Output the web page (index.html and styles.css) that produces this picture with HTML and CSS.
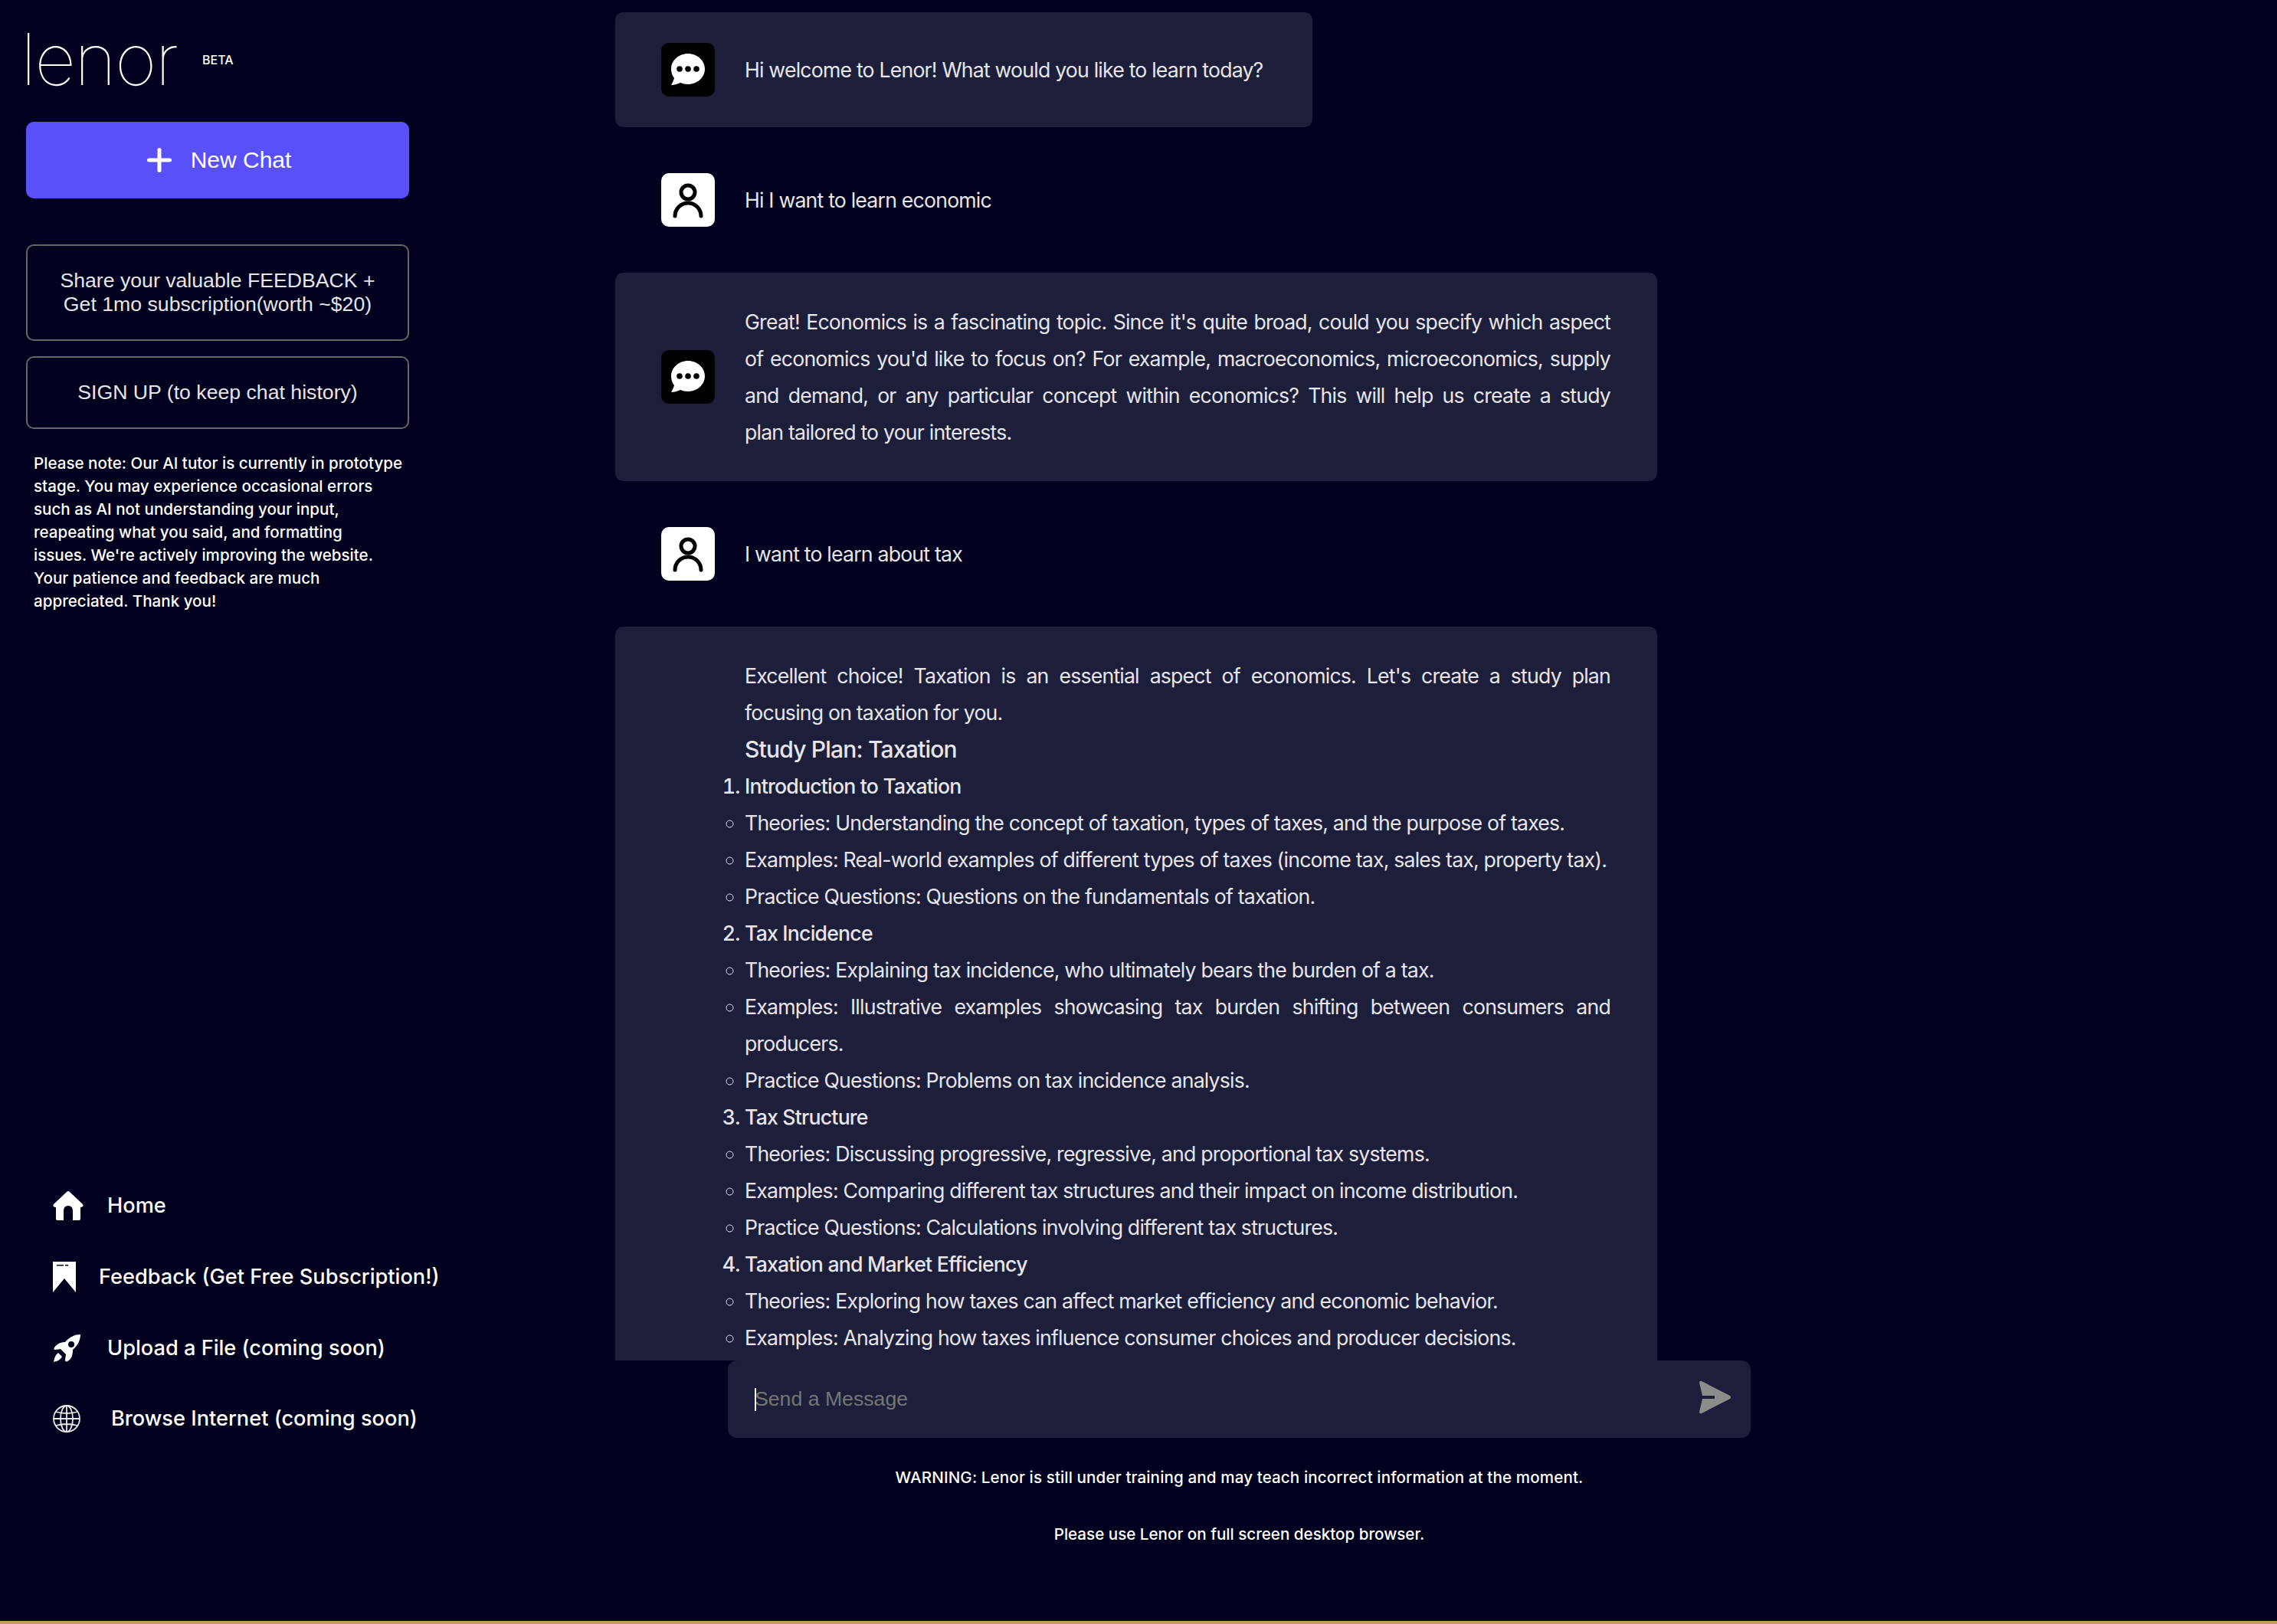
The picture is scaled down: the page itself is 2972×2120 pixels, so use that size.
FILE: index.html
```html
<!DOCTYPE html>
<html lang="en">
<head>
<meta charset="utf-8">
<title>Lenor</title>
<link rel="stylesheet" href="styles.css">
</head>
<body>
<div class="app">
  <aside class="sidebar">
    <div class="brand">
      <span class="logo">lenor</span>
      <span class="beta">BETA</span>
    </div>
    <button class="new-chat">
      <svg class="plus" viewBox="0 0 32 32"><path d="M16 2.5V29.500M2.500 16H29.500"/></svg>
      <span>New Chat</span>
    </button>
    <button class="outline outline-tall">Share your valuable FEEDBACK +<br>Get 1mo subscription(worth ~$20)</button>
    <button class="outline outline-short">SIGN UP (to keep chat history)</button>
    <p class="note">Please note: Our AI tutor is currently in prototype<br>stage. You may experience occasional errors<br>such as AI not understanding your input,<br>reapeating what you said, and formatting<br>issues. We're actively improving the website.<br>Your patience and feedback are much<br>appreciated. Thank you!</p>
    <nav class="nav">
      <a class="nav-item nav-home">
        <svg class="nav-icon" width="40" height="38" viewBox="0 0 40 38"><path d="M20 0Q21 0 22 1L39 17Q41 20 37 21H36V36Q36 38 34 38H26V26Q26 19 20 19Q14 19 14 26V38H6Q4 38 4 36V21H3Q-1 20 1 17L18 1Q19 0 20 0Z"/></svg>
        <span>Home</span>
      </a>
      <a class="nav-item nav-feedback">
        <svg class="nav-icon" width="30" height="40" viewBox="0 0 30 40"><path fill-rule="evenodd" d="M0 0H30V40L15 22L0 40ZM5 4V5.500H14V4ZM16 4V5.500H20V4Z"/></svg>
        <span>Feedback (Get Free Subscription!)</span>
      </a>
      <a class="nav-item nav-upload">
        <svg class="nav-icon" width="36" height="36" viewBox="0 0 36 36"><path fill-rule="evenodd" d="M36 0C29 0 22 3 16 10C12 10 6 11 2 17C1 19 1 20 3 20L10 19L17 26L16 33C16 35 17 36 19 35C25 32 26 26 26 20C33 14 36 7 36 0ZM24 9A4 4 0 1 0 24 17A4 4 0 1 0 24 9Z"/><path d="M7 24L12 29C9 34 5 35 1 36C2 31 3 27 7 24Z"/></svg>
        <span>Upload a File (coming soon)</span>
      </a>
      <a class="nav-item nav-browse">
        <svg class="nav-icon globe" width="36" height="36" viewBox="0 0 36 36"><circle cx="18" cy="18" r="17"/><ellipse cx="18" cy="18" rx="8" ry="17"/><path d="M18 1V35M1 18H35M4 9Q18 13 32 9M4 27Q18 23 32 27"/></svg>
        <span>Browse Internet (coming soon)</span>
      </a>
    </nav>
  </aside>

  <main class="main">
    <div class="thread">
      <article class="msg msg-bot msg-fit">
        <svg class="avatar avatar-bot" viewBox="0 0 70 70"><path d="M35 14C47 14 57 23 57 34C57 45 47 54 35 54C31 54 28 53 25 52C21 54 17 55 13 55C15 52 16 49 17 46C14.500 43 13 39 13 34C13 23 23 14 35 14Z" fill="#fff"/><circle cx="24" cy="34" r="3.800"/><circle cx="35" cy="34" r="3.800"/><circle cx="46" cy="34" r="3.800"/></svg>
        <div class="body"><p class="oneline">Hi welcome to Lenor! What would you like to learn today?</p></div>
      </article>
      <article class="msg">
        <svg class="avatar avatar-user" viewBox="0 0 70 70"><circle cx="35" cy="25" r="9"/><path d="M18 56A17 17 0 0 1 52 56"/></svg>
        <div class="body"><p>Hi I want to learn economic</p></div>
      </article>
      <article class="msg msg-bot">
        <svg class="avatar avatar-bot" viewBox="0 0 70 70"><path d="M35 14C47 14 57 23 57 34C57 45 47 54 35 54C31 54 28 53 25 52C21 54 17 55 13 55C15 52 16 49 17 46C14.500 43 13 39 13 34C13 23 23 14 35 14Z" fill="#fff"/><circle cx="24" cy="34" r="3.800"/><circle cx="35" cy="34" r="3.800"/><circle cx="46" cy="34" r="3.800"/></svg>
        <div class="body"><p>Great! Economics is a fascinating topic. Since it's quite broad, could you specify which aspect of economics you'd like to focus on? For example, macroeconomics, microeconomics, supply and demand, or any particular concept within economics? This will help us create a study plan&nbsp;tailored to your interests.</p></div>
      </article>
      <article class="msg">
        <svg class="avatar avatar-user" viewBox="0 0 70 70"><circle cx="35" cy="25" r="9"/><path d="M18 56A17 17 0 0 1 52 56"/></svg>
        <div class="body"><p>I want to learn about tax</p></div>
      </article>
      <article class="msg msg-bot">
        <div class="avatar avatar-blank"></div>
        <div class="body">
          <p>Excellent choice! Taxation is an essential aspect of economics. Let's create a study plan focusing on taxation for you.</p>
          <h3>Study Plan: Taxation</h3>
          <ol><li>Introduction to Taxation</li></ol>
          <ul>
            <li>Theories: Understanding the concept of taxation, types of taxes, and the purpose of taxes.</li>
            <li class="oneline">Examples: Real-world examples of different types of taxes (income tax, sales tax, property tax).</li>
            <li>Practice Questions: Questions on the fundamentals of taxation.</li>
          </ul>
          <ol start="2"><li>Tax Incidence</li></ol>
          <ul>
            <li>Theories: Explaining tax incidence, who ultimately bears the burden of a tax.</li>
            <li>Examples: Illustrative examples showcasing tax burden shifting between consumers and producers.</li>
            <li>Practice Questions: Problems on tax incidence analysis.</li>
          </ul>
          <ol start="3"><li>Tax Structure</li></ol>
          <ul>
            <li>Theories: Discussing progressive, regressive, and proportional tax systems.</li>
            <li>Examples: Comparing different tax structures and their impact on income distribution.</li>
            <li>Practice Questions: Calculations involving different tax structures.</li>
          </ul>
          <ol start="4"><li>Taxation and Market Efficiency</li></ol>
          <ul>
            <li>Theories: Exploring how taxes can affect market efficiency and economic behavior.</li>
            <li>Examples: Analyzing how taxes influence consumer choices and producer decisions.</li>
          </ul>
        </div>
      </article>
    </div>
    <div class="composer">
      <div class="input-box">
        <input class="input" type="text" placeholder="Send a Message" aria-label="Send a Message">
        <span class="caret"></span>
        <svg class="send" width="42" height="44" viewBox="0 0 42 44"><path fill-rule="evenodd" d="M0 3Q0 0 3 1L40 20Q42 22 40 24L3 43Q0 44 0 41L4 24H20V20H4Z"/></svg>
      </div>
      <p class="warning warning-first">WARNING: Lenor is still under training and may teach incorrect information at the moment.</p>
      <p class="warning warning-second">Please use Lenor on full screen desktop browser.</p>
    </div>
  </main>
</div>
<div class="strip"></div>
</body>
</html>
```

FILE: styles.css
```css
* { box-sizing: border-box; }
html, body { margin: 0; height: 100%; }
body {
  background: #01001e;
  color: #fff;
  font-family: Inter, "Noto Sans", sans-serif;
  display: flex;
  flex-direction: column;
  overflow: hidden;
}
.app { flex: 1; display: flex; min-height: 0; }
.strip { height: 4px; background: #c79b6c; flex: none; }

/* sidebar */
.sidebar {
  width: 600px;
  flex: none;
  padding: 26px 0 243px 34px;
  display: flex;
  flex-direction: column;
}
.brand { display: flex; align-items: flex-start; height: 93px; }
.logo {
  font-family: Inter, sans-serif;
  font-weight: 100;
  font-size: 94px;
  line-height: 96px;
  width: 230px;
  margin-top: 3px;
  letter-spacing: -2px;
  text-indent: -7px;
}
.beta {
  font-family: Inter, sans-serif;
  font-size: 16px;
  font-weight: 500;
  line-height: 20px;
  margin-top: 42px;
}
button { font-family: "Liberation Sans", Arial, sans-serif; cursor: pointer; }
.new-chat {
  width: 500px;
  height: 100px;
  margin-top: 40px;
  border: 0;
  border-radius: 10px;
  background: #5a50f9;
  color: #fff;
  font-size: 30px;
  display: flex;
  align-items: center;
  justify-content: center;
  gap: 25px;
  padding: 0 0 0 4px;
}
.plus { width: 32px; height: 32px; fill: none; stroke: #fff; stroke-width: 5; stroke-linecap: round; }
.outline {
  width: 500px;
  background: transparent;
  border: 2px solid #666;
  border-radius: 10px;
  color: #e5e5ea;
  font-size: 26.67px;
  line-height: 31px;
  padding: 0;
}
.outline-tall { height: 126px; margin-top: 60px; }
.outline-short { height: 95px; margin-top: 20px; }
.note {
  margin: 30px 0 0 10px;
  font-size: 20.600px;
  line-height: 30px;
  font-weight: 450;
  color: #fff;
}
.nav { margin-top: auto; display: flex; flex-direction: column; gap: 50px; }
.nav-item {
  display: flex;
  align-items: center;
  height: 43px;
  margin-left: 35px;
  font-size: 27.200px;
  font-weight: 450;
  color: #fff;
}
.nav-icon { flex: none; fill: #fff; }
.globe { fill: none; stroke: #e8e8e8; stroke-width: 1.800; }
.nav-home { gap: 31px; }
.nav-feedback { gap: 30px; }
.nav-upload { gap: 35px; }
.nav-browse { gap: 40px; margin-top: -1px; }

/* chat */
.main { flex: 1; min-width: 0; display: flex; flex-direction: column; padding-left: 203px; }
.thread {
  height: 1776px;
  flex: none;
  overflow: hidden;
  padding-top: 16px;
  display: flex;
  flex-direction: column;
  align-items: flex-start;
  gap: 20px;
}
.msg {
  width: 1360px;
  flex: none;
  display: flex;
  align-items: center;
  gap: 39px;
  padding: 40px 61px 40px 60px;
  border-radius: 10px;
  color: #e5e5ea;
  font-size: 26.67px;
  letter-spacing: -0.800px;
  line-height: 48px;
}
.msg-bot { background: #1d1f3a; }
.msg-fit { width: 910px; }
.oneline { white-space: nowrap; }
.avatar { width: 70px; height: 70px; flex: none; border-radius: 10px; align-self: center; }
.avatar-bot { background: #000; }
.avatar-user { background: #fff; fill: none; stroke: #000; stroke-width: 5; stroke-linecap: round; }
.avatar-blank { align-self: flex-start; height: 0; }
.body { flex: 1; min-width: 0; text-align: justify; }
.body p { margin: 0; }
.body h3 { margin: 0; font-size: 30px; font-weight: 500; }
.body ol, .body ul { margin: 0; padding: 0; }
.body ol { font-weight: 500; }
.body ul { list-style-type: circle; }

/* composer */
.composer { width: 1335px; margin-left: 147px; }
.input-box {
  height: 101px;
  border-radius: 12px;
  background: #1d1f3a;
  display: flex;
  align-items: center;
  padding: 0 25px 0 35px;
  position: relative;
}
.input {
  flex: 1;
  background: transparent;
  border: 0;
  outline: 0;
  color: #fff;
  font-family: "Liberation Sans", Arial, sans-serif;
  font-size: 26.67px;
  padding: 0;
}
.input::placeholder { color: #757575; opacity: 1; }
.caret { position: absolute; left: 35px; top: 36px; width: 2px; height: 30px; background: #fff; }
.send { flex: none; fill: #8c8c8c; margin-top: -6px; }
.warning { margin: 0; text-align: center; font-size: 20.600px; font-weight: 450; line-height: 30px; color: #fff; }
.warning-first { margin-top: 37px; letter-spacing: 0.120px; }
.warning-second { margin-top: 44px; }
```
